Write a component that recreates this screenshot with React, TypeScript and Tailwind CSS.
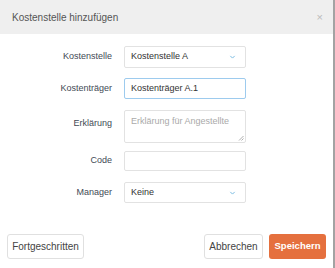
import React from 'react';

const Chevron = () => (
  <svg width="7" height="5" viewBox="0 0 7 5" className="absolute right-[9px] top-1/2 -translate-y-1/2">
    <path d="M1.3 1.4 L3.5 3.6 L5.7 1.4" fill="none" stroke="#7dbde2" strokeWidth="1" />
  </svg>
);

const Row = ({
  label,
  children,
  className = '',
  labelClass = '',
}: {
  label: string;
  children: React.ReactNode;
  className?: string;
  labelClass?: string;
}) => (
  <div className={`flex items-center ${className}`}>
    <label className={`w-[112px] text-right text-[9px] text-[#3f4a55] ${labelClass}`}>{label}</label>
    <div className="ml-[12px] w-[122px]">{children}</div>
  </div>
);

const App: React.FC = () => {
  return (
    <div
      className="w-[335px] h-[268px] bg-white border-r-2 border-[#a3a3a3] flex flex-col"
      style={{ fontFamily: '"Liberation Sans", Arial, sans-serif' }}
    >
      {/* Header */}
      <div className="h-[34px] bg-[#efefef] flex items-center justify-between pl-[12px] pr-[10px]">
        <span className="text-[10px] text-[#555]">Kostenstelle hinzufügen</span>
        <span className="text-[11px] text-[#bbb] leading-none">×</span>
      </div>

      {/* Form */}
      <div className="flex flex-col pt-[12px]">
        <Row label="Kostenstelle">
          <div className="relative h-[22px] border border-[#e2e2e2] rounded-[2px] flex items-center px-[6px] text-[9px] text-[#333]">
            Kostenstelle A
            <Chevron />
          </div>
        </Row>
        <Row label="Kostenträger" className="mt-[10px]">
          <div className="h-[21px] border border-[#9dcbee] rounded-[2px] flex items-center px-[6px] text-[9px] text-[#333]">
            Kostenträger A.1
          </div>
        </Row>
        <Row label="Erklärung" className="mt-[11px] !items-start" labelClass="pt-[7px]">
          <div className="relative h-[33px] border border-[#e2e2e2] rounded-[2px] px-[6px] pt-[4px] text-[9px] text-[#aaa] whitespace-nowrap">
            Erklärung für Angestellte
            <svg width="6" height="6" viewBox="0 0 6 6" className="absolute right-[1px] bottom-[1px]">
              <path d="M5.5 1 L1 5.5 M5.5 3.5 L3.5 5.5" stroke="#999" strokeWidth="0.8" />
            </svg>
          </div>
        </Row>
        <Row label="Code" className="mt-[8px]">
          <div className="h-[20px] border border-[#e2e2e2] rounded-[2px]" />
        </Row>
        <Row label="Manager" className="mt-[11px]">
          <div className="relative h-[21px] border border-[#e2e2e2] rounded-[2px] flex items-center px-[6px] text-[9px] text-[#333]">
            Keine
            <Chevron />
          </div>
        </Row>
      </div>

      {/* Footer */}
      <div className="mt-auto mb-[9px] flex items-center px-[7px]">
        <button className="h-[25px] w-[77px] border border-[#e0e0e0] rounded-[3px] text-[10px] text-[#444]">
          Fortgeschritten
        </button>
        <div className="ml-auto flex gap-[6px]">
          <button className="h-[25px] w-[59px] border border-[#e0e0e0] rounded-[3px] text-[10px] text-[#444]">
            Abbrechen
          </button>
          <button className="h-[25px] w-[57px] bg-[#e5703e] rounded-[3px] text-[9.5px] text-white font-bold">
            Speichern
          </button>
        </div>
      </div>
    </div>
  );
};

export default App;
